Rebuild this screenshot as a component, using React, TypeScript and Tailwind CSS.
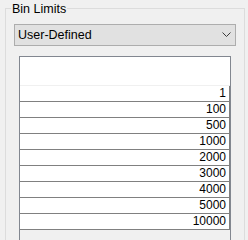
const limits = [1, 100, 500, 1000, 2000, 3000, 4000, 5000, 10000];

export default function App() {
  return (
    <div className="w-[248px] h-[240px] overflow-hidden bg-[#f0f0f0] pt-2 pl-[5px] font-['Liberation_Sans',Arial,sans-serif] text-black">
      <div className="relative w-[240px] h-[260px] border border-[#dcdcdc] px-2 pt-[15px]">
        <span className="absolute -top-[7px] left-[5px] bg-[#f0f0f0] px-[1px] text-[12.5px] leading-[15px]">
          Bin Limits
        </span>

        <div className="flex h-[22px] items-center justify-between border border-[#adadad] bg-[#e1e1e1] pl-[3px] pr-[3px]">
          <span className="text-[12.5px] leading-[15px]">User-Defined</span>
          <svg width="10" height="6" viewBox="0 0 10 6" className="mb-[1px]">
            <polyline points="0.5,0.5 4.5,4.5 8.5,0.5" fill="none" stroke="#3c3c3c" strokeWidth="1" />
          </svg>
        </div>

        <div className="mx-[5px] mt-[10px] h-[200px] border border-[#828790] bg-[#f0f0f0]">
          <div className="h-[29px] bg-white border-b border-[#f0f0f0]" />
          {limits.map((v) => (
            <div
              key={v}
              className="h-[16px] bg-white border-b border-r border-[#808080] pr-[3px] text-right text-[12px] leading-[15px]"
            >
              {v}
            </div>
          ))}
        </div>
      </div>
    </div>
  );
}
